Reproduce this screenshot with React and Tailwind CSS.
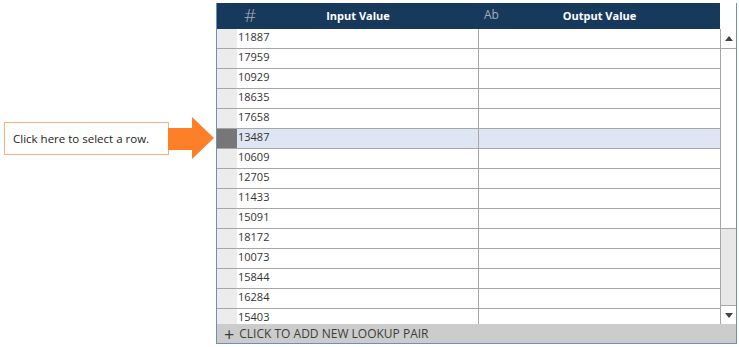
import React from 'react';

const values = [
  11887, 17959, 10929, 18635, 17658, 13487, 10609, 12705,
  11433, 15091, 18172, 10073, 15844, 16284, 15403,
];

const SELECTED = 5;

const Row = ({ value, selected }) => (
  <div className={`flex h-[20px] shrink-0 border-b border-[#a6a6a6] ${selected ? 'bg-[#dfe6f3]' : 'bg-white'}`}>
    <div className={`w-[20px] shrink-0 ${selected ? 'bg-[#777777]' : 'bg-[#ececec]'}`} />
    <div className="w-[242px] shrink-0 border-r border-[#a6a6a6] pl-[1px] text-[11px] leading-[15px] text-[#333]">
      {value}
    </div>
    <div className="flex-1" />
  </div>
);

const Triangle = ({ down }) => (
  <svg width="8" height="5" viewBox="0 0 8 5">
    <path d={down ? 'M0 0 L8 0 L4 5 Z' : 'M0 5 L8 5 L4 0 Z'} fill="#444" />
  </svg>
);

const App = () => {
  return (
    <div
      className="flex w-[739px] h-[347px] bg-white overflow-hidden"
      style={{ fontFamily: '"Open Sans", "Noto Sans", sans-serif' }}
    >
      {/* Callout + arrow */}
      <div className="w-[216px] shrink-0 flex items-center pt-[4px] h-[272px]">
        <div className="ml-[4px] w-[165px] h-[33px] shrink-0 border border-[#f4b183] bg-white pl-[8px] text-[11.5px] leading-[31px] text-[#222]">
          Click here to select a row.
        </div>
        <svg width="46" height="42" viewBox="0 0 46 42" className="shrink-0 -ml-[1px]">
          <path d="M0 11 L24 11 L24 0 L46 21 L24 42 L24 33 L0 33 Z" fill="#fd7f27" />
        </svg>
      </div>

      {/* Lookup table */}
      <div className="mt-[3px] w-[521px] h-[341px] flex flex-col border-x border-b border-[#6d8fbd]">
        <div className="flex h-[321px]">
          <div className="w-[503px] flex flex-col">
            {/* Header */}
            <div className="flex h-[26px] shrink-0 bg-[#173a5c] text-white">
              <div className="w-[20px] shrink-0" />
              <div className="w-[242px] shrink-0 relative flex items-center justify-center">
                <span className="absolute left-[7px] top-[0px] text-[19px] leading-[24px] font-light text-[#a4adbb]">#</span>
                <span className="text-[11px] font-bold">Input Value</span>
              </div>
              <div className="flex-1 relative flex items-center justify-center">
                <span className="absolute left-[5px] top-[4px] text-[12px] leading-[16px] text-[#a4adbb]">Ab</span>
                <span className="text-[11px] font-bold">Output Value</span>
              </div>
            </div>
            {/* Body */}
            <div className="flex-1 overflow-hidden flex flex-col">
              {values.map((v, i) => (
                <Row key={v} value={v} selected={i === SELECTED} />
              ))}
            </div>
          </div>

          {/* Scrollbar */}
          <div className="flex-1 flex flex-col">
            <div className="h-[26px] shrink-0 bg-white" />
            <div className="flex-1 flex flex-col border-l border-[#a6a6a6]">
              <div className="h-[20px] shrink-0 flex items-center justify-center border-b border-[#a6a6a6] bg-white">
                <Triangle />
              </div>
              <div className="h-[180px] shrink-0 bg-white border-b border-[#a6a6a6]" />
              <div className="flex-1 bg-[#e8e8e8]" />
              <div className="h-[19px] shrink-0 flex items-center justify-center border-t border-[#a6a6a6] bg-white">
                <Triangle down />
              </div>
            </div>
          </div>
        </div>

        {/* Footer */}
        <div className="flex-1 flex items-center bg-[#cccccc] pl-[7px] text-[12px] text-[#3c3c3c]">
          <span className="text-[18px] leading-[16px] mr-[5px] font-normal">+</span>
          <span>CLICK TO ADD NEW LOOKUP PAIR</span>
        </div>
      </div>
    </div>
  );
};

export default App;
